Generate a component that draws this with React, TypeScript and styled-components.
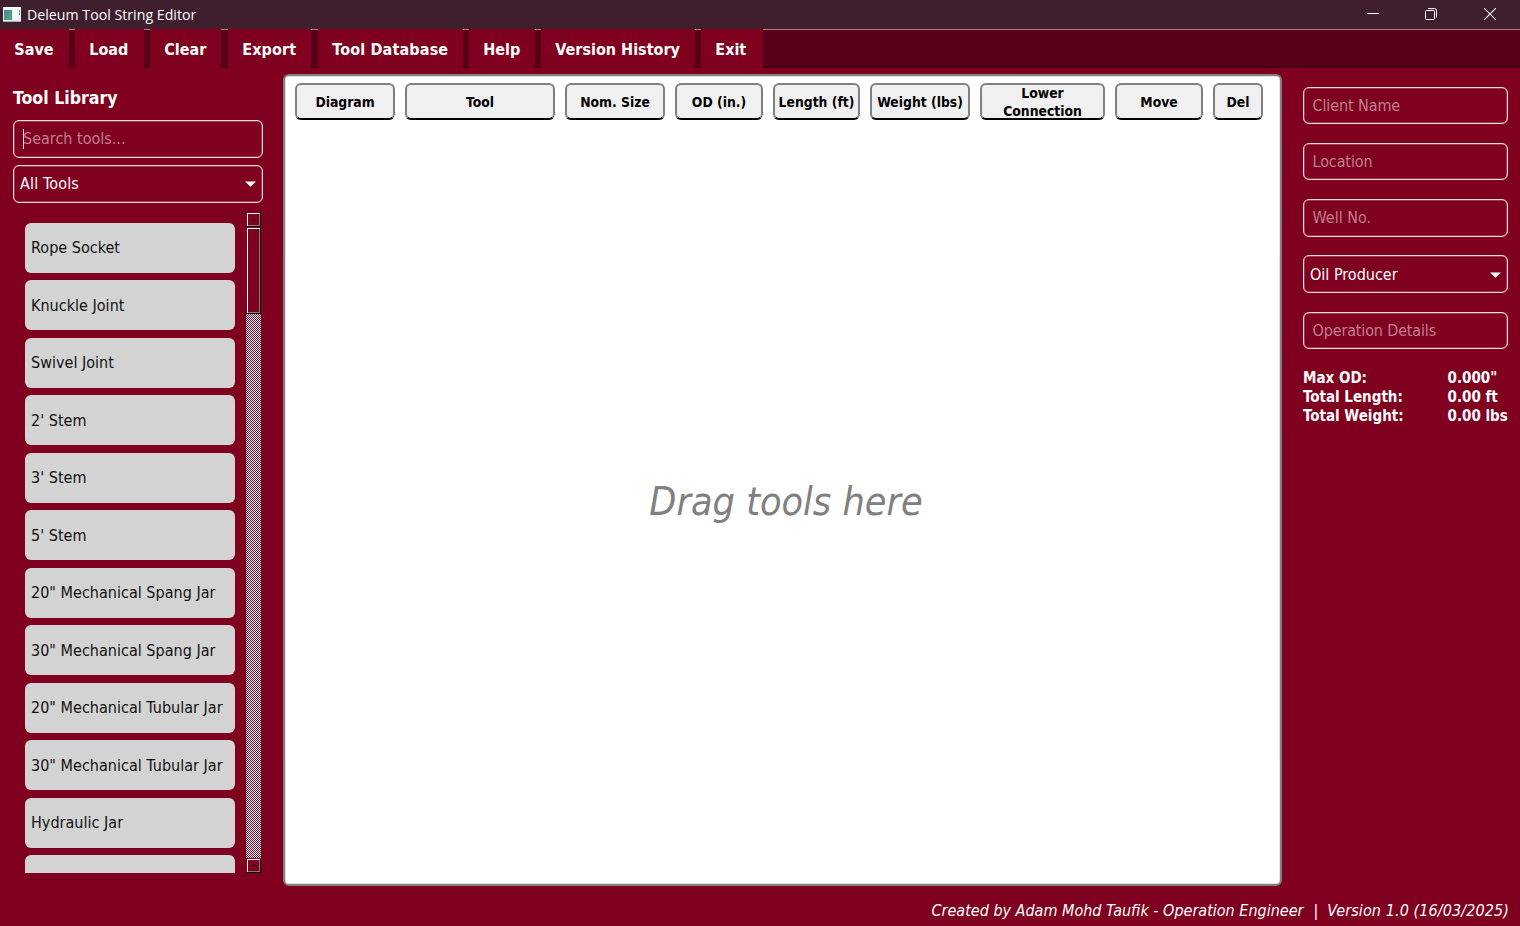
import React from 'react';
import styled, { createGlobalStyle } from 'styled-components';

const MAROON = '#800020';

const GlobalStyle = createGlobalStyle`
  * { box-sizing: border-box; }
  body {
    margin: 0;
    background: ${MAROON};
    color: #fff;
    font: 16px/20px "DejaVu Sans Condensed", "DejaVu Sans", sans-serif;
    overflow: hidden;
  }
`;

const Window = styled.div`
  display: flex;
  flex-direction: column;
  width: 1520px;
  height: 926px;
  background: ${MAROON};
`;

const TitleBar = styled.header`
  display: flex;
  align-items: center;
  height: 29px;
  flex: none;
  padding-left: 3px;
  background: #3f1e2e;
`;

const AppTitle = styled.span`
  flex: 1;
  margin-left: 6px;
  font: 14.2px/20px "Open Sans", "Noto Sans", sans-serif;
`;

const WindowButton = styled.span<{ $width: number }>`
  display: flex;
  justify-content: center;
  width: ${(p) => p.$width}px;
  padding-bottom: 2px;
`;

const Toolbar = styled.nav`
  display: flex;
  height: 39px;
  flex: none;
  background: linear-gradient(#ad7a8b 0 1px, #580018 1px 37px, #46000f 37px);
`;

const ToolbarButton = styled.button<{ $width: number; $gap?: number; $spacing?: number }>`
  width: ${(p) => p.$width}px;
  margin: 0 ${(p) => p.$gap ?? 6}px 0 0;
  padding: 2px 0 0 14.3px;
  border: 0;
  background: ${MAROON};
  color: #fff;
  font: bold 16px/37px "DejaVu Sans Condensed", sans-serif;
  letter-spacing: ${(p) => p.$spacing ?? 0}px;
  text-align: left;
  white-space: nowrap;
`;

const Workspace = styled.main`
  display: flex;
  height: 818px;
  flex: none;
  padding-top: 6px;
`;

const Library = styled.aside`
  display: flex;
  flex-direction: column;
  width: 283px;
  padding: 13px 20px 13px 13px;
`;

const LibraryTitle = styled.h2`
  margin: 0 0 10px;
  font-size: 17.6px;
  line-height: 23px;
`;

const Field = styled.div<{ $muted?: boolean; $spacing?: number }>`
  display: flex;
  align-items: center;
  height: 38px;
  flex: none;
  padding: 0 6px 0 ${(p) => (p.$muted ? 9 : 6)}px;
  border: 1px solid #efdce1;
  box-shadow: inset 0 0 0 0.5px rgba(255, 255, 255, 0.45);
  border-radius: 6px;
  color: ${(p) => (p.$muted ? '#bf7f8f' : '#fff')};
  letter-spacing: ${(p) => p.$spacing ?? 0}px;
  white-space: nowrap;
`;

const SearchField = styled(Field)`
  margin-bottom: 7px;
`;

const DetailField = styled(Field)`
  height: 37.5px;
  padding-top: 1px;
  padding-left: ${(p) => (p.$muted ? 8.5 : 6)}px;
`;

const Caret = styled.span`
  width: 1px;
  height: 20px;
  margin-right: -1px;
  background: #d9e6e0;
`;

const Value = styled.span`
  flex: 1;
`;

const Browser = styled.div`
  display: flex;
  justify-content: space-between;
  width: 248px;
  height: 661px;
  margin-top: 9px;
`;

const ToolList = styled.div`
  display: flex;
  flex-direction: column;
  gap: 7.5px;
  width: 222px;
  padding: 10.8px 0 0 12px;
  overflow: hidden;
`;

const ToolItem = styled.div`
  height: 50px;
  flex: none;
  padding: 0.6px 0 0 6px;
  border-radius: 6px;
  background: #d3d3d3;
  color: #111;
  line-height: 50px;
  letter-spacing: 0.02px;
  white-space: nowrap;
`;

const ScrollBar = styled.div`
  display: flex;
  flex-direction: column;
  width: 15px;
`;

const ScrollPiece = styled.div<{ $height: number }>`
  display: flex;
  align-items: center;
  justify-content: center;
  height: ${(p) => p.$height}px;
  flex: none;
  border: 1px solid;
  border-color: ${MAROON} #000 #000 ${MAROON};
  box-shadow: inset 1px 1px #fff, inset -1px -1px #808080;
`;

const ScrollTrack = styled.div`
  flex: 1;
  background: repeating-conic-gradient(#fff 0 25%, ${MAROON} 0 50%) 0 0 / 2px 2px;
`;

const Canvas = styled.section`
  display: flex;
  flex-direction: column;
  width: 999px;
  height: 812px;
  border: 2px solid #808080;
  box-shadow: inset 0 0 0 0.5px #c8c8c8;
  border-radius: 6px;
  background: #fff;
`;

const HeaderRow = styled.div`
  display: flex;
  gap: 10px;
  padding: 7px 0 0 10px;
`;

const HeaderCell = styled.div<{ $width: number }>`
  display: flex;
  align-items: center;
  justify-content: center;
  width: ${(p) => p.$width}px;
  height: 37px;
  border: 2px solid #808080;
  border-bottom-color: #000;
  border-radius: 6px;
  background: #f0f0f0;
  color: #000;
  font-size: 13.8px;
  font-weight: bold;
  line-height: 18px;
  text-align: center;
  white-space: nowrap;
`;

const ColumnLabel = styled.span`
  white-space: pre;
`;

const DropHint = styled.div`
  display: flex;
  align-items: center;
  justify-content: center;
  flex: 1;
  padding: 0 0 0 7px;
  color: #808080;
  font-size: 39.2px;
  font-style: italic;
`;

const Details = styled.aside`
  display: flex;
  flex-direction: column;
  gap: 18.75px;
  width: 238px;
  padding: 12.7px 12px 0 21px;
`;

const Totals = styled.dl`
  display: grid;
  grid-template-columns: 144.5px 1fr;
  margin: 1px 0 0;
  font-size: 15px;
  font-weight: bold;
  line-height: 19px;
  white-space: nowrap;
`;

const Term = styled.dt``;

const Amount = styled.dd`
  margin: 0;
`;

const Footer = styled.footer`
  display: flex;
  justify-content: flex-end;
  gap: 9px;
  padding: 15px 11px 0 0;
  font-style: italic;
  white-space: nowrap;
`;

const Credit = styled.span`
  margin-right: 1px;
`;

const Release = styled.span`
  letter-spacing: 0.1px;
`;

const menu = [
  { label: 'Save', width: 69 },
  { label: 'Load', width: 69 },
  { label: 'Clear', width: 71, gap: 7 },
  { label: 'Export', width: 83, gap: 7, spacing: 0.1 },
  { label: 'Tool Database', width: 145, spacing: 0.15 },
  { label: 'Help', width: 66 },
  { label: 'Version History', width: 154 },
  { label: 'Exit', width: 62, gap: 0 },
];

const tools = [
  'Rope Socket', 'Knuckle Joint', 'Swivel Joint', "2' Stem", "3' Stem", "5' Stem",
  '20" Mechanical Spang Jar', '30" Mechanical Spang Jar',
  '20" Mechanical Tubular Jar', '30" Mechanical Tubular Jar', 'Hydraulic Jar', '',
];

const columns: [string, number][] = [
  ['Diagram', 100], ['Tool', 150], ['Nom. Size', 100], ['OD (in.)', 88], ['Length (ft)', 87],
  ['Weight (lbs)', 100], ['Lower\nConnection', 125], ['Move', 88], ['Del', 50],
];

const DropArrow = () => (
  <svg width="11" height="6" viewBox="0 0 11 6">
    <path d="M0 0.5H11L5.5 5.8Z" fill="#fff" />
  </svg>
);

const AppIcon = () => (
  <svg width="18" height="15" viewBox="0 0 18 15">
    <defs>
      <linearGradient id="screen" x1="0" y1="0" x2="1" y2="1">
        <stop offset="0" stopColor="#4f83a6" />
        <stop offset="1" stopColor="#55a878" />
      </linearGradient>
    </defs>
    <path d="M0 0H18V15H0Z" fill="#e9eeee" />
    <path d="M0 0H18V2H0Z" fill="#fff" />
    <path d="M1 3H9V13H1Z" fill="url(#screen)" />
    <path d="M10 3H14V13H10Z" fill="#f7f7f7" />
    <path d="M16 3H17V8H16Z" fill="#62a58c" />
    <path d="M0 14H18V15H0Z" fill="#aeb8b8" />
  </svg>
);

export default function App() {
  return (
    <Window>
      <GlobalStyle />
      <TitleBar>
        <AppIcon />
        <AppTitle>Deleum Tool String Editor</AppTitle>
        <WindowButton $width={58}>
          <svg width="12" height="12"><path d="M0 5.5H12" stroke="#fff" /></svg>
        </WindowButton>
        <WindowButton $width={58}>
          <svg width="12" height="12" fill="none" stroke="#fff">
            <rect x="0.5" y="2.5" width="9" height="9" rx="1" />
            <path d="M3 0.6H9.5Q11.5 0.6 11.5 2.6V9.5" />
          </svg>
        </WindowButton>
        <WindowButton $width={60}>
          <svg width="12" height="12"><path d="M0 0L12 12M12 0L0 12" stroke="#fff" strokeWidth="1.1" /></svg>
        </WindowButton>
      </TitleBar>
      <Toolbar>
        {menu.map((m) => (
          <ToolbarButton key={m.label} $width={m.width} $gap={m.gap} $spacing={m.spacing}>{m.label}</ToolbarButton>
        ))}
      </Toolbar>
      <Workspace>
        <Library>
          <LibraryTitle>Tool Library</LibraryTitle>
          <SearchField $muted><Caret />Search tools...</SearchField>
          <Field $spacing={0.15}><Value>All Tools</Value><DropArrow /></Field>
          <Browser>
            <ToolList>
              {tools.map((t, i) => <ToolItem key={i}>{t}</ToolItem>)}
            </ToolList>
            <ScrollBar>
              <ScrollPiece $height={15}>
                <svg width="3" height="2"><path d="M1 0H2V1H3V2H0V1H1Z" /></svg>
              </ScrollPiece>
              <ScrollPiece $height={87} />
              <ScrollTrack />
              <ScrollPiece $height={15}>
                <svg width="3" height="2"><path d="M0 0H3V1H2V2H1V1H0Z" /></svg>
              </ScrollPiece>
            </ScrollBar>
          </Browser>
        </Library>
        <Canvas>
          <HeaderRow>
            {columns.map(([label, width]) => (
              <HeaderCell key={label} $width={width}><ColumnLabel>{label}</ColumnLabel></HeaderCell>
            ))}
          </HeaderRow>
          <DropHint>Drag tools here</DropHint>
        </Canvas>
        <Details>
          <DetailField $muted $spacing={-0.1}>Client Name</DetailField>
          <DetailField $muted $spacing={-0.1}>Location</DetailField>
          <DetailField $muted>Well No.</DetailField>
          <DetailField><Value>Oil Producer</Value><DropArrow /></DetailField>
          <DetailField $muted $spacing={-0.15}>Operation Details</DetailField>
          <Totals>
            <Term>Max OD:</Term><Amount>0.000"</Amount>
            <Term>Total Length:</Term><Amount>0.00 ft</Amount>
            <Term>Total Weight:</Term><Amount>0.00 lbs</Amount>
          </Totals>
        </Details>
      </Workspace>
      <Footer>
        <Credit>Created by Adam Mohd Taufik - Operation Engineer</Credit>
        <span>|</span>
        <Release>Version 1.0 (16/03/2025)</Release>
      </Footer>
    </Window>
  );
}
